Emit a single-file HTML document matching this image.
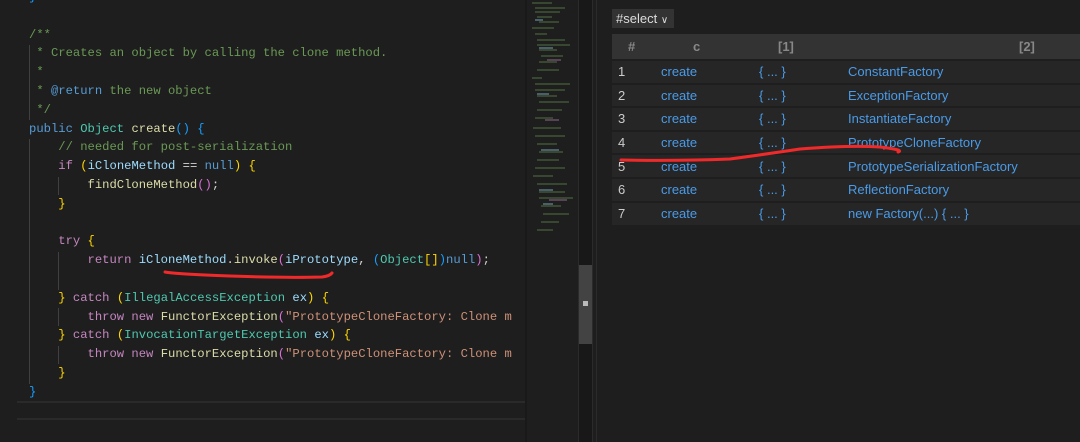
<!DOCTYPE html>
<html><head><meta charset="utf-8"><style>
*{margin:0;padding:0;box-sizing:border-box}
body{width:1080px;height:442px;background:#1e1e1e;overflow:hidden;position:relative;font-family:"Liberation Sans",sans-serif}
#code{position:absolute;left:0;top:-12px;width:525px;font-family:"Liberation Mono",monospace;font-size:12.2px;line-height:18.8px;color:#d4d4d4}
.l{height:18.8px;padding-left:29px;white-space:pre;overflow:hidden}
.c{color:#6a9955}.k{color:#569cd6}.p{color:#c586c0}.t{color:#4ec9b0}.f{color:#dcdcaa}.v{color:#9cdcfe}.y{color:#ffd700}.m{color:#da70d6}.s{color:#ce9178}.b{color:#179fff}
.g{position:absolute;width:1px;background:#404040}
.hl{position:absolute;left:17px;width:510px;height:2px;background:#2a2a2a}
#mini{position:absolute;left:527px;top:0;width:51px;height:442px;background:#1e1e1e}
#sb{position:absolute;left:578px;top:0;width:15px;height:442px;background:#181818;border-left:1px solid #2b2b2b;border-right:1px solid #2b2b2b}
#thumb{position:absolute;left:579px;top:265px;width:13px;height:79px;background:#434343}
#sel{position:absolute;left:612px;top:9px;width:62px;height:19px;background:#333;color:#ddd;font-size:13px;line-height:19px;padding-left:4px}
table{position:absolute;left:612px;top:34px;width:468px;border-collapse:collapse;font-size:13px}
th{background:#333;color:#888;height:26px;font-weight:bold;text-align:left}
td{background:#262626;height:23.6px;border-top:2px solid #1e1e1e;color:#4a9be8}
td:first-child{color:#ccc;padding-left:6px}
</style></head><body>
<div id="code"><div class="l"><span class="b">}</span></div><div class="l"> </div><div class="l c">/**</div><div class="l c"> * Creates an object by calling the clone method.</div><div class="l c"> *</div><div class="l c"> * <span class="k">@return</span> the new object</div><div class="l c"> */</div><div class="l"><span class="k">public</span> <span class="t">Object</span> <span class="f">create</span><span class="b">()</span> <span class="b">{</span></div><div class="l">    <span class="c">// needed for post-serialization</span></div><div class="l">    <span class="p">if</span> <span class="y">(</span><span class="v">iCloneMethod</span> == <span class="k">null</span><span class="y">)</span> <span class="y">{</span></div><div class="l">        <span class="f">findCloneMethod</span><span class="m">()</span>;</div><div class="l">    <span class="y">}</span></div><div class="l"> </div><div class="l">    <span class="p">try</span> <span class="y">{</span></div><div class="l">        <span class="p">return</span> <span class="v">iCloneMethod</span>.<span class="f">invoke</span><span class="m">(</span><span class="v">iPrototype</span>, <span class="b">(</span><span class="t">Object</span><span class="y">[]</span><span class="b">)</span><span class="k">null</span><span class="m">)</span>;</div><div class="l"> </div><div class="l">    <span class="y">}</span> <span class="p">catch</span> <span class="y">(</span><span class="t">IllegalAccessException</span> <span class="v">ex</span><span class="y">)</span> <span class="y">{</span></div><div class="l">        <span class="p">throw</span> <span class="p">new</span> <span class="f">FunctorException</span><span class="m">(</span><span class="s">"PrototypeCloneFactory: Clone m</span></div><div class="l">    <span class="y">}</span> <span class="p">catch</span> <span class="y">(</span><span class="t">InvocationTargetException</span> <span class="v">ex</span><span class="y">)</span> <span class="y">{</span></div><div class="l">        <span class="p">throw</span> <span class="p">new</span> <span class="f">FunctorException</span><span class="m">(</span><span class="s">"PrototypeCloneFactory: Clone m</span></div><div class="l">    <span class="y">}</span></div><div class="l"><span class="b">}</span></div></div>
<div class="g" style="left:29px;top:45px;height:75px"></div>
<div class="g" style="left:29px;top:139px;height:245px"></div>
<div class="g" style="left:58px;top:177px;height:18px"></div>
<div class="g" style="left:58px;top:252px;height:38px"></div>
<div class="g" style="left:58px;top:308px;height:18px"></div>
<div class="g" style="left:58px;top:346px;height:18px"></div>
<div class="hl" style="top:401px"></div>
<div class="hl" style="top:418px"></div>
<div style="position:absolute;left:525px;top:0;width:2px;height:442px;background:#191919"></div>
<div id="mini">
<svg width="51" height="240" viewBox="0 0 51 240">
<g stroke-width="1.2" opacity="0.55">
<path d="M5 3h20M8 8h30M8 12h25M10 17h15M12 22h20M5 28h22M8 34h12M10 40h28M10 45h33M12 50h18M14 56h22M12 62h18M10 70h22M5 78h10M8 84h35M8 90h30M10 96h20M12 102h30M10 110h25M8 118h18M6 128h28M8 136h30M10 144h20M12 152h24M10 160h22M8 168h30M6 176h20M10 184h30M12 192h26M12 198h34M14 206h20M16 214h26M14 222h18M10 230h16" stroke="#6a9955"/>
<path d="M8 20h8M12 48h14M10 94h12M14 150h18M12 190h14M16 204h10" stroke="#9cdcfe"/>
<path d="M20 60h14M18 120h14M22 200h18" stroke="#c586c0"/>
</g></svg></div>
<div id="sb"></div>
<div id="thumb"><div style="position:absolute;left:4px;top:36px;width:5px;height:5px;background:#bbb"></div></div>
<div style="position:absolute;left:596px;top:0;width:1px;height:442px;background:#2b2b2b"></div>
<div id="sel">#select <span style="font-size:10px">&#8744;</span></div>
<table>
<tr><th style="width:38px;padding-left:16px">#</th><th style="width:98px;padding-left:43px">c</th><th style="width:100px;padding-left:30px">[1]</th><th style="padding-left:171px">[2]</th></tr>
<tr><td>1</td><td style="padding-left:11px">create</td><td style="padding-left:11px">{ ... }</td><td>ConstantFactory</td></tr>
<tr><td>2</td><td style="padding-left:11px">create</td><td style="padding-left:11px">{ ... }</td><td>ExceptionFactory</td></tr>
<tr><td>3</td><td style="padding-left:11px">create</td><td style="padding-left:11px">{ ... }</td><td>InstantiateFactory</td></tr>
<tr><td>4</td><td style="padding-left:11px">create</td><td style="padding-left:11px">{ ... }</td><td>PrototypeCloneFactory</td></tr>
<tr><td>5</td><td style="padding-left:11px">create</td><td style="padding-left:11px">{ ... }</td><td>PrototypeSerializationFactory</td></tr>
<tr><td>6</td><td style="padding-left:11px">create</td><td style="padding-left:11px">{ ... }</td><td>ReflectionFactory</td></tr>
<tr><td>7</td><td style="padding-left:11px">create</td><td style="padding-left:11px">{ ... }</td><td>new Factory(...) { ... }</td></tr>
</table>
<svg style="position:absolute;left:0;top:0" width="1080" height="442">
<path d="M165 272 Q175 274 230 276 T322 277 Q330 276 332 273" stroke="#f02a2a" stroke-width="3" fill="none" stroke-linecap="round"/>
<path d="M621 160 Q680 161 730 159 Q760 155 800 149 Q850 145 880 147 Q905 150 898 152" stroke="#f02a2a" stroke-width="3" fill="none" stroke-linecap="round"/>
</svg>
</body></html>
